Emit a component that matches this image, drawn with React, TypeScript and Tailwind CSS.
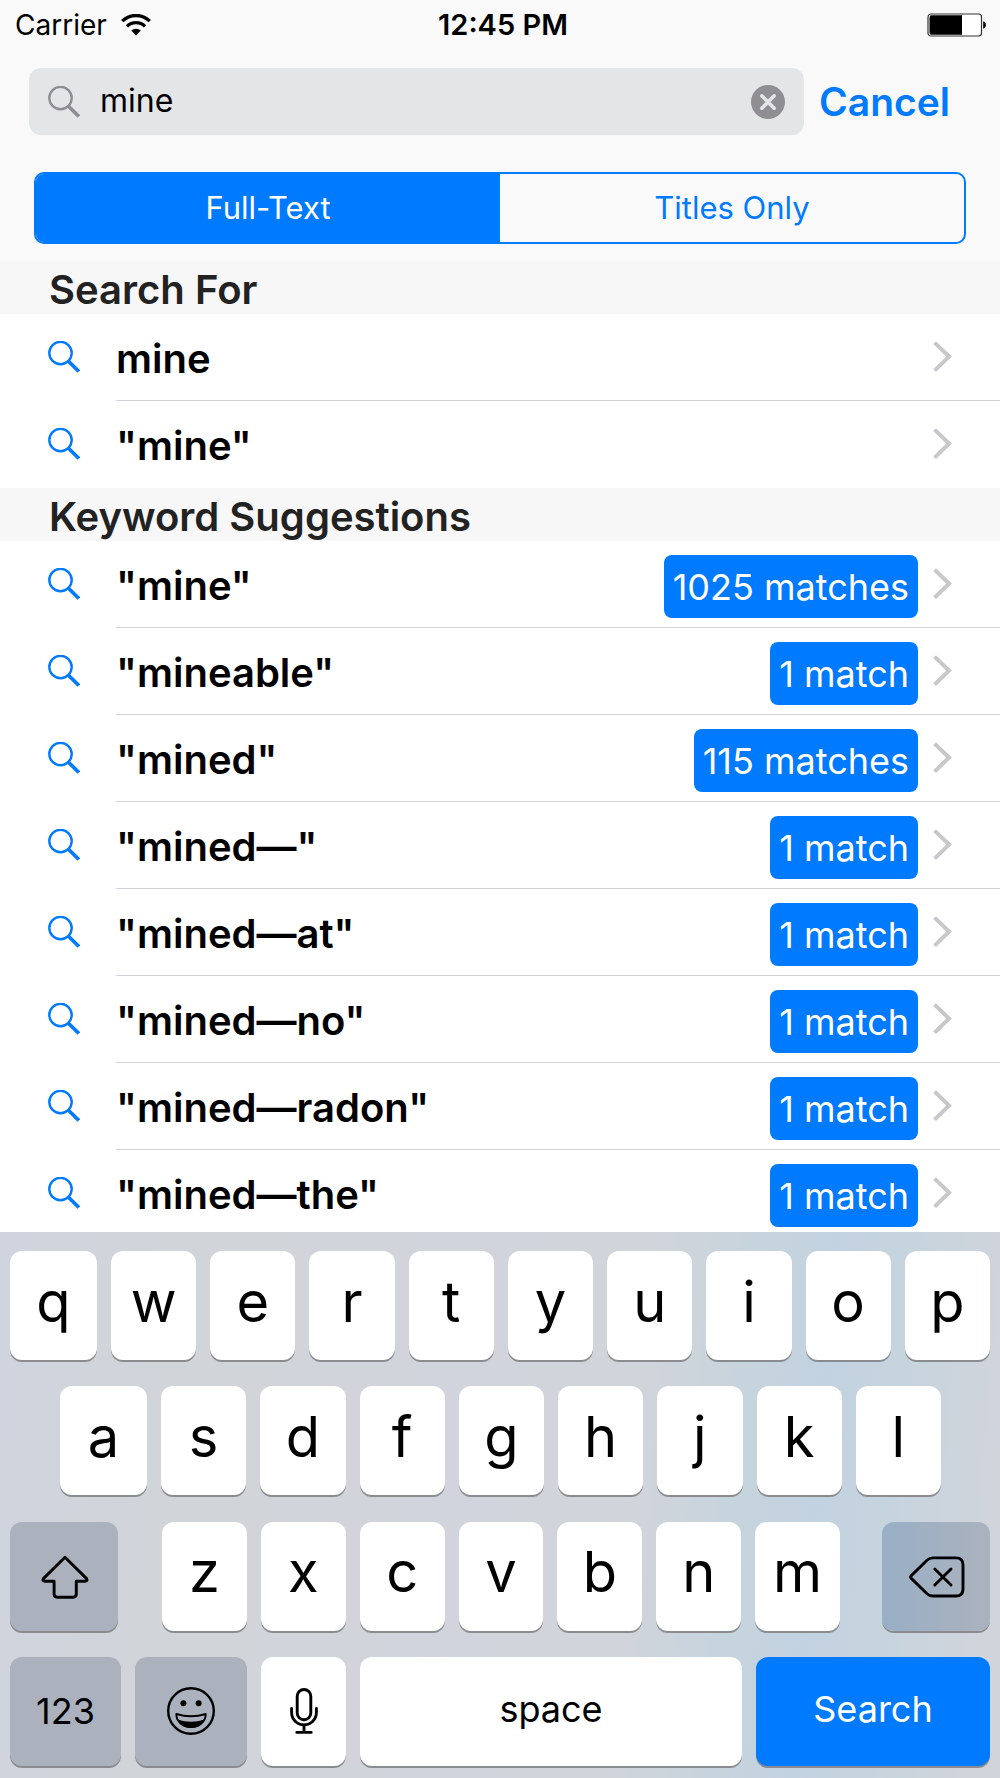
import { useState } from 'react'
import clsx from 'clsx'

const searchFor = ['mine', '"mine"']

const suggestions = [
  { term: '"mine"', count: 1025 },
  { term: '"mineable"', count: 1 },
  { term: '"mined"', count: 115 },
  { term: '"mined—"', count: 1 },
  { term: '"mined—at"', count: 1 },
  { term: '"mined—no"', count: 1 },
  { term: '"mined—radon"', count: 1 },
  { term: '"mined—the"', count: 1 },
]

const scopes = ['Full-Text', 'Titles Only']

function SearchIcon({ className }: { className?: string }) {
  return (
    <svg viewBox="0 0 32 32" fill="none" stroke="currentColor" className={clsx('size-8 shrink-0', className)} aria-hidden="true">
      <circle cx="12.5" cy="12" r="11.2" strokeWidth="2.4" />
      <path d="M20.2 20 30.8 30.4" strokeWidth="3.6" />
    </svg>
  )
}

function Chevron() {
  return (
    <svg viewBox="0 0 19 32" fill="none" stroke="#c7c7cc" strokeWidth="4" className="h-8 w-[19px] shrink-0" aria-hidden="true">
      <path d="M1.6 1.6 16 15.6 1.6 29.6" />
    </svg>
  )
}

function WifiIcon() {
  return (
    <svg viewBox="0 0 30 22" fill="none" stroke="currentColor" className="h-[22px] w-[30px]" aria-hidden="true">
      <path d="M1.2 7.2a19.5 19.5 0 0 1 27.6 0" strokeWidth="3.3" />
      <path d="M6 12.4a12.8 12.8 0 0 1 18 0" strokeWidth="3.3" />
      <path d="M15 21.6 10.2 16.6a7 7 0 0 1 9.6 0Z" fill="currentColor" stroke="none" />
    </svg>
  )
}

function BatteryIcon() {
  return (
    <svg viewBox="0 0 60 24" className="h-6 w-[60px]" aria-hidden="true">
      <rect x="1" y="1" width="53.5" height="22" rx="3" fill="#fff" stroke="#333" strokeWidth="1.2" />
      <path d="M4.5 2.3H35v19.4H4.5a2 2 0 0 1-2-2V4.3a2 2 0 0 1 2-2Z" />
      <path d="M56.2 8.2c3.6 1.2 3.6 6.4 0 7.6Z" />
    </svg>
  )
}

function ClearIcon() {
  return (
    <svg viewBox="0 0 34 34" className="size-[34px]" aria-hidden="true">
      <circle cx="17" cy="17" r="17" fill="#8e8e93" />
      <path d="m10.8 10.8 12.4 12.4m0-12.4L10.8 23.2" stroke="#e4e5e7" strokeWidth="3.6" strokeLinecap="round" />
    </svg>
  )
}

function ShiftIcon() {
  return (
    <svg viewBox="0 0 48 44" fill="none" stroke="currentColor" strokeWidth="2.9" strokeLinejoin="round" className="mt-[2px] ml-[2px] h-11 w-12" aria-hidden="true">
      <path d="M24 2.2 45.6 23.6q1.4 2.5-1.2 2.6H35.3V39q0 3.200-3.200 3.200H16.300q-3.200 0-3.200-3.200V26.200H3.600q-2.600-.1-1.200-2.600Z" />
    </svg>
  )
}

function BackspaceIcon() {
  return (
    <svg viewBox="0 0 56 42" fill="none" stroke="currentColor" strokeWidth="2.9" strokeLinecap="round" strokeLinejoin="round" className="mt-[2px] ml-[2px] h-[42px] w-14" aria-hidden="true">
      <path d="M24 1.9H47q7 0 7 7V33q0 7-7 7H24q-3.5 0-6-2.3L2.3 22.4q-1.3-1.4 0-2.8L18 4.200q2.500-2.300 6-2.300Z" />
      <path d="m25.8 13 16.2 16M42 13 25.8 29" />
    </svg>
  )
}

function EmojiIcon() {
  return (
    <svg viewBox="0 0 48 48" fill="none" stroke="currentColor" strokeWidth="2.4" className="size-12" aria-hidden="true">
      <circle cx="24" cy="24" r="22.8" />
      <circle cx="16.4" cy="16.3" r="3" fill="currentColor" stroke="none" />
      <circle cx="31.6" cy="16.3" r="3" fill="currentColor" stroke="none" />
      <path d="M9.3 27q14.7 4.600 29.400 0C38.700 35 32 40 24 40S9.300 35 9.300 27Z" strokeWidth="1.9" strokeLinejoin="round" />
      <path d="M10.5 32.5Q24 37 37.5 32.5 33.5 41 24 41T10.5 32.5Z" fill="currentColor" stroke="none" />
    </svg>
  )
}

function MicIcon() {
  return (
    <svg viewBox="0 0 28 46" fill="none" stroke="currentColor" strokeWidth="2.9" strokeLinecap="round" className="h-[46px] w-7" aria-hidden="true">
      <rect x="7.2" y="1.5" width="13.6" height="30.3" rx="6.8" />
      <path d="M1.6 20.5v4a12.4 12.4 0 0 0 24.8 0v-4M14 37v7M6.8 44.4h14.4" />
    </svg>
  )
}

function StatusBar() {
  return (
    <div className="grid h-[50px] grid-cols-3 items-center pr-[13px] pl-[15px] text-[28px] leading-8">
      <div className="flex items-center gap-[14px]">
        <span>Carrier</span>
        <WifiIcon />
      </div>
      <span className="pl-1 text-center text-[29px] font-semibold">12:45 PM</span>
      <div className="flex justify-end">
        <BatteryIcon />
      </div>
    </div>
  )
}

function SectionHeader({ title }: { title: string }) {
  return (
    <h2 className="flex h-[53px] items-center bg-[#f7f7f7] px-[49px] pt-1 text-[40px] leading-12 font-semibold text-[#222]">
      {title}
    </h2>
  )
}

function ResultRow({ term, count }: { term: string; count?: number }) {
  return (
    <li className="group">
      <button className="flex h-[87px] w-full items-center pl-12 text-left">
        <SearchIcon className="mb-[2px] text-[#007aff]" />
        <span className="ml-9 flex h-full flex-1 items-center border-b border-[#d1d1d6] pr-12 group-last:border-transparent">
          <span className="flex-1 pt-[3px] text-[40px] leading-12 font-semibold text-black">{term}</span>
          {count !== undefined && (
            <span className="mt-[5px] mr-[15px] flex h-[63px] items-center rounded-lg bg-[#007aff] px-[9px] text-[36px] leading-10 text-white">
              {count} {count === 1 ? 'match' : 'matches'}
            </span>
          )}
          <Chevron />
        </span>
      </button>
    </li>
  )
}

const keyBase = 'flex h-[109px] min-w-0 flex-1 items-center justify-center rounded-xl shadow-[0_2px_0_#898b8f]'

function LetterKeys({ letters, className }: { letters: string; className?: string }) {
  return (
    <div className={clsx('flex gap-[14px]', className)}>
      {letters.split('').map((letter) => (
        <button key={letter} className={clsx(keyBase, 'bg-white pb-2 text-[56px] leading-14')}>
          {letter}
        </button>
      ))}
    </div>
  )
}

function Keyboard() {
  return (
    <div className="flex h-[546px] shrink-0 flex-col justify-between bg-[linear-gradient(95deg,#d0d4de_0%,#d1d4d8_20%,#d1d4dc_45%,#d2d4db_62%,#c6d4dd_73%,#c3d2e1_80%,#c6d4de_87%,#d2d4db_98%)] px-[10px] pt-[19px] pb-3">
      <LetterKeys letters="qwertyuiop" className="[&>:first-child]:min-w-[87px]" />
      <LetterKeys letters="asdfghjkl" className="pr-[49px] pl-[50px] [&>:first-child]:min-w-[87px]" />
      <div className="grid grid-cols-[108fr_680fr_108fr] gap-[42px]">
        <button aria-label="Shift" className={clsx(keyBase, 'bg-[#abb2be]')}>
          <ShiftIcon />
        </button>
        <LetterKeys letters="zxcvbnm" className="pl-[2px]" />
        <button aria-label="Delete" className={clsx(keyBase, 'bg-linear-to-r from-[#98afc5] to-[#abb2bd]')}>
          <BackspaceIcon />
        </button>
      </div>
      <div className="grid grid-cols-[111fr_112fr_85fr_382fr_234fr] gap-[14px] text-[36px] leading-10">
        <button className={clsx(keyBase, 'bg-[#abb2be]')}>123</button>
        <button aria-label="Emoji" className={clsx(keyBase, 'bg-[#abb2be]')}>
          <EmojiIcon />
        </button>
        <button aria-label="Dictate" className={clsx(keyBase, 'bg-white')}>
          <MicIcon />
        </button>
        <button className={clsx(keyBase, 'bg-white pb-1')}>space</button>
        <button className={clsx(keyBase, 'bg-[#007aff] pb-1 text-white')}>Search</button>
      </div>
    </div>
  )
}

export default function App() {
  const [query, setQuery] = useState('mine')
  const [scope, setScope] = useState('Full-Text')

  return (
    <div className="flex h-screen flex-col overflow-hidden bg-white font-['Inter',sans-serif] text-black">
      <header className="shrink-0 bg-[#f9f9f9] pb-[17px]">
        <StatusBar />
        <div className="mt-[18px] flex items-center gap-[15px] pr-[50px] pl-[29px]">
          <label className="flex h-[67px] flex-1 items-center rounded-xl bg-[#e4e5e7] px-[19px]">
            <SearchIcon className="text-[#8e8e93]" />
            <input
              type="text"
              aria-label="Search"
              value={query}
              onChange={(e) => setQuery(e.target.value)}
              className="ml-5 min-w-0 flex-1 bg-transparent pb-[2px] text-[32px] leading-10 outline-none"
            />
            <button aria-label="Clear text" onClick={() => setQuery('')}>
              <ClearIcon />
            </button>
          </label>
          <button className="text-[39px] leading-12 font-semibold text-[#007aff]">Cancel</button>
        </div>
        <div className="mx-[34px] mt-[37px] flex h-[72px] overflow-hidden rounded-[10px] border-2 border-[#007aff]">
          {scopes.map((name) => (
            <button
              key={name}
              aria-pressed={scope === name}
              onClick={() => setScope(name)}
              className={clsx('flex-1 text-[31px] leading-9', scope === name ? 'bg-[#007aff] text-white' : 'text-[#007aff]')}
            >
              {name}
            </button>
          ))}
        </div>
      </header>
      <main className="min-h-0 flex-1 overflow-hidden">
        <SectionHeader title="Search For" />
        <ul>
          {searchFor.map((term) => (
            <ResultRow key={term} term={term} />
          ))}
        </ul>
        <SectionHeader title="Keyword Suggestions" />
        <ul>
          {suggestions.map((item) => (
            <ResultRow key={item.term} {...item} />
          ))}
        </ul>
      </main>
      <Keyboard />
    </div>
  )
}
